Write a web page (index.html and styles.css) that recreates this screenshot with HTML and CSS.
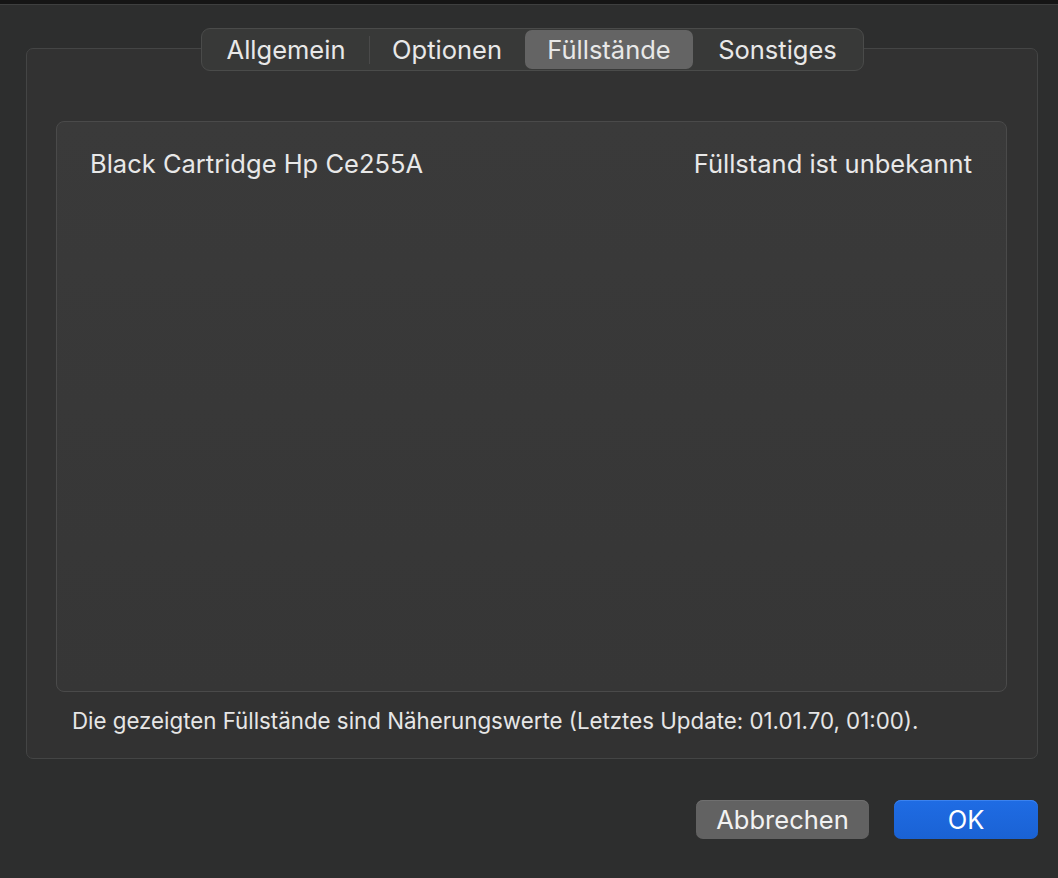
FILE: index.html
```html
<!DOCTYPE HTML>
<html>
    <head>
        <meta charset="UTF-8">
        <title>Füllstände</title>
        <link rel="stylesheet" href="styles.css">
    </head>
    <body>
        <div class="topbar"></div>
        <div id="sheet">
            <div class="group">
                <ul class="tabs">
                    <li class="t1">Allgemein</li>
                    <li class="t2 sep">Optionen</li>
                    <li class="t3 active">Füllstände</li>
                    <li class="t4">Sonstiges</li>
                </ul>
                <div class="list">
                    <div class="row">
                        <span>Black Cartridge Hp Ce255A</span>
                        <span>Füllstand ist unbekannt</span>
                    </div>
                </div>
                <p class="note">Die gezeigten Füllstände sind Näherungswerte (Letztes Update: 01.01.70, 01:00).</p>
            </div>
            <div class="buttons">
                <button class="cancel">Abbrechen</button>
                <button class="ok">OK</button>
            </div>
        </div>
    </body>
</html>
```

FILE: styles.css
```css
body{margin:0;background:#2d2e2e;font-family:Inter,"Noto Sans",sans-serif;color:#e4e4e4;}
ul,li{margin:0;padding:0;list-style:none;}
p{margin:0;}
button{margin:0;padding:0;font-family:inherit;}

.topbar{
    height:4px;
    background:#151515;
    border-bottom:1px solid #3e3f3f;
}
#sheet{
    padding:43px 20px 0 26px;
}
/* Rahmen um Reiter und Liste */
.group{
    display:flex;
    flex-direction:column;
    height:711px;
    box-sizing:border-box;
    padding:0 30px 0 29px;
    background:#323232;
    border:1px solid #444545;
    border-radius:7px;
}
.tabs{
    display:flex;
    align-self:center;
    height:43px;
    box-sizing:border-box;
    margin-top:-21px;
    margin-left:2px;
    padding:1px 1px;
    background:#383938;
    border:1px solid #4a4b4a;
    border-radius:9px;
    font-size:25.5px;
}
.tabs li{
    position:relative;
    display:flex;
    align-items:center;
    justify-content:center;
    height:39px;
    border-radius:7px;
    color:#e8e8e8;
}
.tabs .t1{width:166px;}
.tabs .t2{width:156px;}
.tabs .t3{width:168px;}
.tabs .t4{width:169px;}
/* kleiner Trennstrich zwischen zwei nicht gewählten Reitern */
.tabs li.sep::before{
    content:"";
    position:absolute;
    left:0;
    top:6px;
    width:1px;
    height:28px;
    background:#4a4a4a;
}
.tabs li.active{background:#646464;}

.list{
    height:571px;
    box-sizing:border-box;
    margin-top:50px;
    padding:26px 34px 0 33px;
    background:linear-gradient(#3a3a3a,#363636);
    border:1px solid #4a4a4a;
    border-radius:8px;
}
.list .row{
    display:flex;
    justify-content:space-between;
    font-size:25.5px;
    color:#e8e8e8;
}
.note{
    margin-top:15px;
    padding-left:16px;
    font-size:22.3px;
    color:#e6e6e6;
}

.buttons{
    display:flex;
    justify-content:flex-end;
    gap:25px;
    margin-top:41px;
}
.buttons button{
    height:39px;
    border:none;
    border-radius:7px;
    color:#f2f2f2;
    font-size:25.5px;
}
.buttons .cancel{
    width:173px;
    background:#626262;
    box-shadow:inset 0 1px 0 #6f6f6f;
}
.buttons .ok{
    width:144px;
    color:#fff;
    background:linear-gradient(#1f6ce4,#1a62d4);
    box-shadow:inset 0 1px 0 #3b82ef;
}
```
